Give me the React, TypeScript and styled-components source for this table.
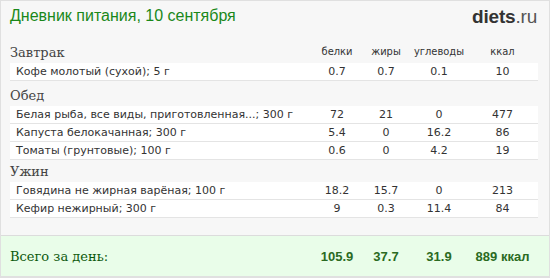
import React from "react";
import styled, { createGlobalStyle } from "styled-components";

const Global = createGlobalStyle`
  html, body { margin: 0; padding: 0; background: #fff; }
  * { box-sizing: border-box; }
`;

const Frame = styled.div`
  width: 550px;
  height: 278px;
  border: 1px solid #e0e0e0;
  background: #f7f7f7;
  display: flex;
  flex-direction: column;
  overflow: hidden;
`;

const Header = styled.div`
  display: flex;
  justify-content: space-between;
  align-items: flex-start;
  padding: 6px 12px 0 9px;
  height: 39px;
`;

const Title = styled.div`
  font-family: "Liberation Sans", Arial, sans-serif;
  font-size: 16px;
  color: #1a881a;
`;

const Logo = styled.div`
  font-family: "Liberation Sans", Arial, sans-serif;
  font-size: 19px;
  color: #333;
  margin-top: -1px;
  letter-spacing: -0.2px;
  b { font-weight: bold; }
  span { color: #555; font-weight: normal; }
`;

const Body = styled.div`
  padding: 0 11px 0 9px;
  flex: 1;
`;

const Grid = styled.div`
  display: grid;
  grid-template-columns: 1fr 48px 50px 56px 71px;
  align-items: center;
`;

const HeadRow = styled(Grid)<{ $h: number }>`
  height: ${(p) => p.$h}px;
  align-items: end;
  padding-bottom: 3px;
`;

const SectionName = styled.div`
  font-family: "DejaVu Serif", serif;
  font-size: 13px;
  color: #444;
`;

const ColLabel = styled.div`
  font-family: "DejaVu Sans", sans-serif;
  font-stretch: condensed;
  font-size: 11px;
  color: #333;
  text-align: center;
  padding-bottom: 2px;
`;

const Row = styled(Grid)`
  height: 18px;
  background: #fff;
  border-bottom: 1px solid #e4e4e4;
  font-family: "DejaVu Sans", sans-serif;
  font-size: 11px;
  color: #333;
`;

const Name = styled.div`
  padding-left: 6px;
  white-space: nowrap;
`;

const Num = styled.div`
  text-align: center;
`;

const Footer = styled(Grid)`
  margin-top: auto;
  height: 42px;
  background: #e9fde9;
  border-top: 1px solid #dcdcdc;
  border-bottom: 1px solid #e0e0e0;
  padding: 0 11px 0 9px;
`;

const Total = styled.div`
  font-family: "DejaVu Serif", serif;
  font-size: 13px;
  color: #0e5a0e;
`;

const TotalNum = styled.div`
  font-family: "Liberation Sans", Arial, sans-serif;
  font-weight: bold;
  font-size: 13px;
  color: #2a6a22;
  text-align: center;
`;

type Item = [string, string, string, string, string];

const sections: { name: string; h: number; items: Item[]; labels?: boolean }[] = [
  {
    name: "Завтрак",
    h: 23,
    labels: true,
    items: [["Кофе молотый (сухой); 5 г", "0.7", "0.7", "0.1", "10"]],
  },
  {
    name: "Обед",
    h: 25,
    items: [
      ["Белая рыба, все виды, приготовленная...; 300 г", "72", "21", "0", "477"],
      ["Капуста белокачанная; 300 г", "5.4", "0", "16.2", "86"],
      ["Томаты (грунтовые); 100 г", "0.6", "0", "4.2", "19"],
    ],
  },
  {
    name: "Ужин",
    h: 22,
    items: [
      ["Говядина не жирная варёная; 100 г", "18.2", "15.7", "0", "213"],
      ["Кефир нежирный; 300 г", "9", "0.3", "11.4", "84"],
    ],
  },
];

export default function App() {
  return (
    <>
      <Global />
      <Frame>
        <Header>
          <Title>Дневник питания, 10 сентября</Title>
          <Logo>
            <b>diets</b>
            <span>.ru</span>
          </Logo>
        </Header>
        <Body>
          {sections.map((s) => (
            <React.Fragment key={s.name}>
              <HeadRow $h={s.h}>
                <SectionName>{s.name}</SectionName>
                {s.labels && (
                  <>
                    <ColLabel>белки</ColLabel>
                    <ColLabel>жиры</ColLabel>
                    <ColLabel>углеводы</ColLabel>
                    <ColLabel>ккал</ColLabel>
                  </>
                )}
              </HeadRow>
              {s.items.map((it) => (
                <Row key={it[0]}>
                  <Name>{it[0]}</Name>
                  <Num>{it[1]}</Num>
                  <Num>{it[2]}</Num>
                  <Num>{it[3]}</Num>
                  <Num>{it[4]}</Num>
                </Row>
              ))}
            </React.Fragment>
          ))}
        </Body>
        <Footer>
          <Total>Всего за день:</Total>
          <TotalNum>105.9</TotalNum>
          <TotalNum>37.7</TotalNum>
          <TotalNum>31.9</TotalNum>
          <TotalNum>889 ккал</TotalNum>
        </Footer>
      </Frame>
    </>
  );
}
